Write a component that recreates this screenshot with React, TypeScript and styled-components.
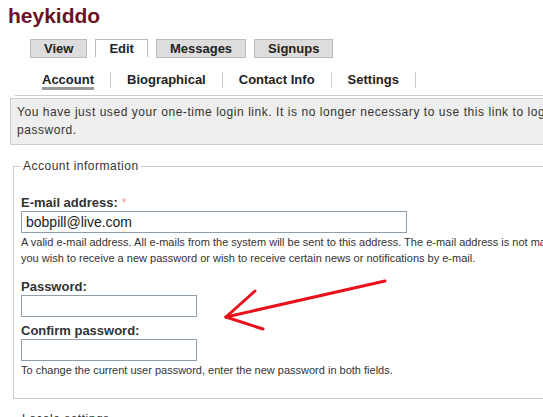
import React from 'react';
import styled, { createGlobalStyle } from 'styled-components';

const GlobalStyle = createGlobalStyle`
    html, body {
        margin: 0;
        padding: 0;
        background: #fff;
        overflow: hidden;
    }
    body {
        font-family: "Liberation Sans", Arial, sans-serif;
        color: #222;
    }
`;

const Page = styled.div`
    position: relative;
    width: 800px;
    padding: 3px 0 0 8px;
`;

const Title = styled.h1`
    margin: 0;
    font-size: 21px;
    line-height: 26px;
    font-weight: bold;
    color: #6b1222;
`;

const PrimaryTabs = styled.ul`
    display: flex;
    gap: 8px;
    list-style: none;
    margin: 10px 0 0 22px;
    padding: 0;
`;

const PrimaryTab = styled.li<{ $active?: boolean }>`
    height: 17px;
    line-height: 17px;
    padding: 0 13px;
    font-size: 13px;
    font-weight: bold;
    color: #222;
    background: ${(p) => (p.$active ? '#fff' : '#ddd')};
    border: 1px solid #bbb;
    border-bottom: ${(p) => (p.$active ? 'none' : '1px solid #bbb')};
`;

const SecondaryTabs = styled.ul`
    display: flex;
    list-style: none;
    margin: 14px 0 0 18px;
    padding: 0;
`;

const SecondaryTab = styled.li<{ $active?: boolean }>`
    padding: 0 16px;
    border-right: 1px solid #ccc;
    height: 16px;
    font-size: 13px;
    font-weight: bold;
    color: #222;

    span {
        display: inline-block;
        line-height: 15px;
        border-bottom: 3px solid ${(p) => (p.$active ? '#999' : 'transparent')};
    }
`;

const Rule = styled.div`
    margin: 7px 0 0 7px;
    border-top: 1px solid #ccc;
`;

const Message = styled.div`
    margin: 2px 0 0 2px;
    padding: 4px 6px 5px 6px;
    background: #eee;
    border: 1px solid #ccc;
    font-size: 12px;
    line-height: 18px;
    letter-spacing: 0.55px;
    color: #333;
`;

const Fieldset = styled.fieldset`
    margin: 14px 0 0 5px;
    padding: 0 7px 13px 7px;
    border: 1px solid #ccc;
    border-right: none;
`;

const Legend = styled.legend`
    padding: 0 2px;
    margin-left: 0;
    font-size: 12px;
    letter-spacing: 0.5px;
    color: #333;
`;

const Item = styled.div`
    margin-top: 6px;

    &:first-of-type {
        margin-top: 22px;
    }
`;

const Label = styled.label`
    display: block;
    font-size: 13px;
    font-weight: bold;
    line-height: 16px;
    color: #333;
`;

const Required = styled.span`
    color: #f99;
    font-weight: normal;
`;

const Input = styled.input<{ $wide?: boolean }>`
    display: block;
    box-sizing: border-box;
    width: ${(p) => (p.$wide ? '386px' : '176px')};
    height: 22px;
    margin: 0;
    padding: 1px 4px;
    border: 1px solid #8e9eab;
    font-family: "Liberation Sans", Arial, sans-serif;
    font-size: 14px;
    color: #222;
    background: #fff;
`;

const Help = styled.div`
    margin-top: 1px;
    padding-bottom: 7px;
    font-size: 11px;
    line-height: 16px;
    color: #333;
`;

const NextFieldset = styled.fieldset`
    margin: 13px 0 0 5px;
    padding: 0 7px;
    border: none;
`;

const Arrow = styled.svg`
    position: absolute;
    left: 0;
    top: 0;
    pointer-events: none;
`;

const App = () => {
    return (
        <>
            <GlobalStyle />
            <Page>
                <Title>heykiddo</Title>
                <PrimaryTabs>
                    <PrimaryTab>View</PrimaryTab>
                    <PrimaryTab $active>Edit</PrimaryTab>
                    <PrimaryTab>Messages</PrimaryTab>
                    <PrimaryTab>Signups</PrimaryTab>
                </PrimaryTabs>
                <SecondaryTabs>
                    <SecondaryTab $active><span>Account</span></SecondaryTab>
                    <SecondaryTab><span>Biographical</span></SecondaryTab>
                    <SecondaryTab><span>Contact Info</span></SecondaryTab>
                    <SecondaryTab><span>Settings</span></SecondaryTab>
                </SecondaryTabs>
                <Rule />
                <Message>
                    You have just used your one-time login link. It is no longer necessary to use this link to login. Please change your
                    <br />
                    password.
                </Message>
                <Fieldset>
                    <Legend>Account information</Legend>
                    <Item>
                        <Label>E-mail address: <Required>*</Required></Label>
                        <Input $wide defaultValue="bobpill@live.com" />
                        <Help>
                            A valid e-mail address. All e-mails from the system will be sent to this address. The e-mail address is not made public and will only be used if
                            <br />
                            you wish to receive a new password or wish to receive certain news or notifications by e-mail.
                        </Help>
                    </Item>
                    <Item>
                        <Label>Password:</Label>
                        <Input type="password" />
                    </Item>
                    <Item>
                        <Label>Confirm password:</Label>
                        <Input type="password" />
                        <Help>To change the current user password, enter the new password in both fields.</Help>
                    </Item>
                </Fieldset>
                <NextFieldset>
                    <Legend>Locale settings</Legend>
                </NextFieldset>
                <Arrow width="543" height="417" viewBox="0 0 543 417">
                    <g stroke="#e8101a" strokeWidth="3" strokeLinecap="round" fill="none">
                        <path d="M385 281 L226 317" />
                        <path d="M226 317 L255 291" />
                        <path d="M226 317 L263 329" />
                    </g>
                </Arrow>
            </Page>
        </>
    );
};

export default App;
